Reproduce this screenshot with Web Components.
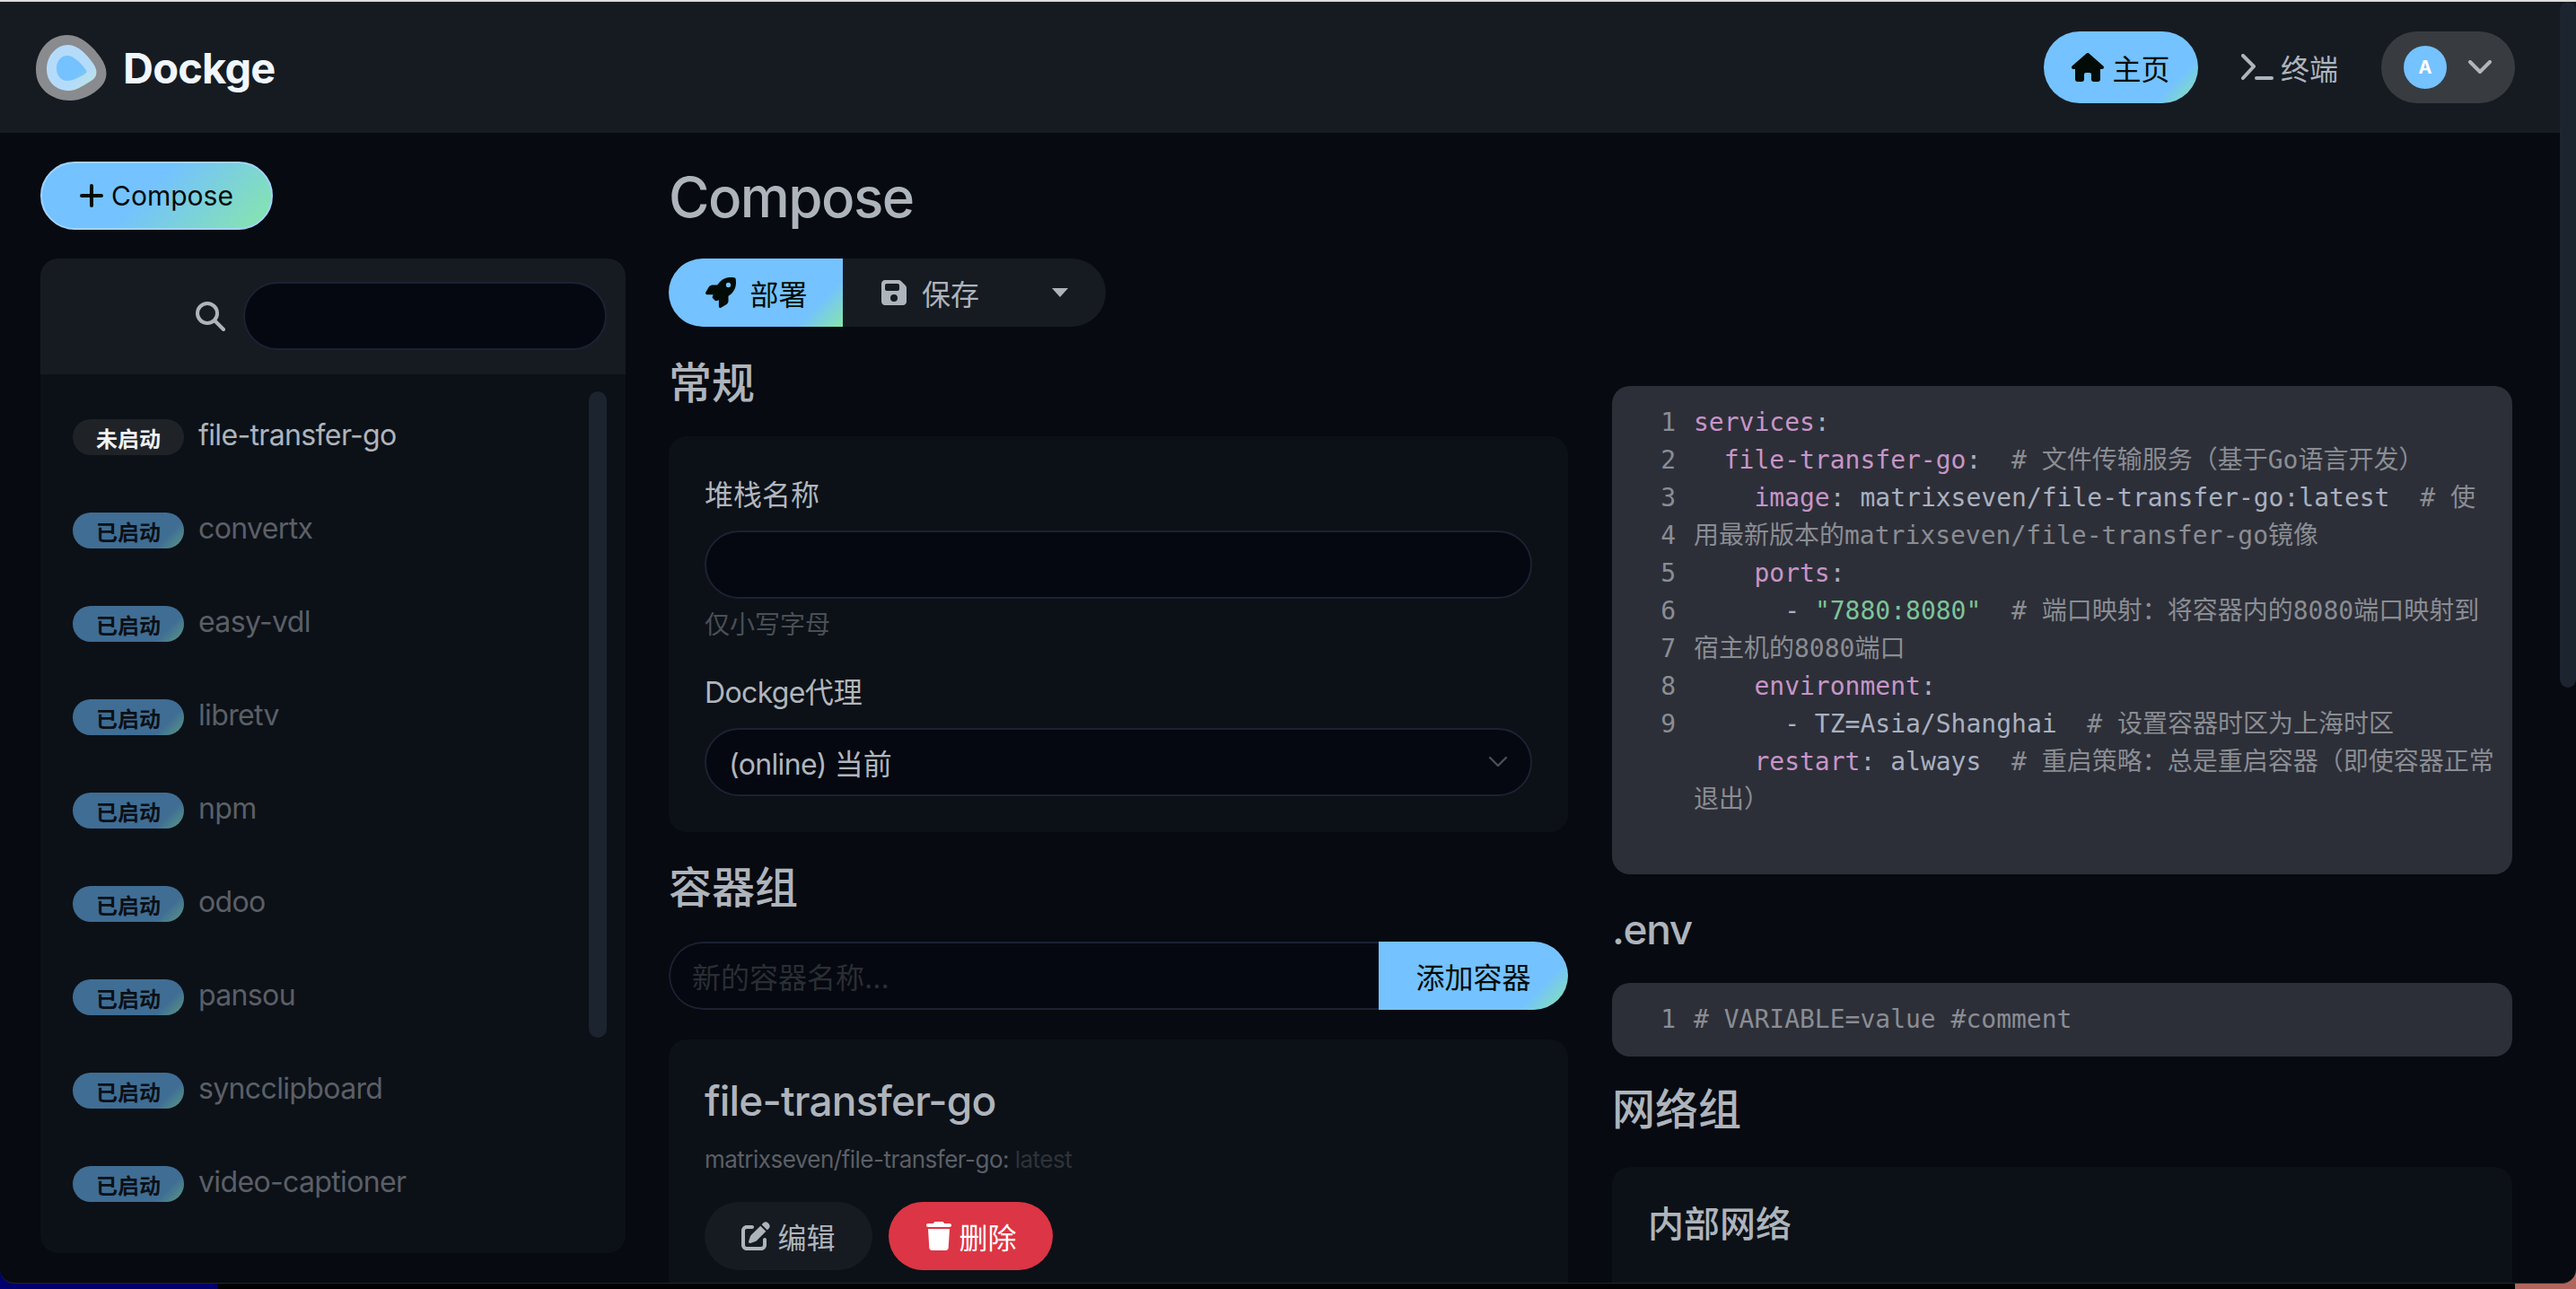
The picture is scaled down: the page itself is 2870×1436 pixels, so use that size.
<!DOCTYPE html>
<html lang="zh-CN">
<head>
<meta charset="utf-8">
<title>Dockge</title>
<style>
  html, body { margin: 0; height: 100%; background: #000; overflow: hidden; }
  body { font-family: Inter, "Noto Sans CJK SC", sans-serif; color: #b1b6bd; }
</style>
</head>
<body>

<dockge-app>
  <dockge-header slot="header"></dockge-header>

  <stack-sidebar slot="sidebar">
    <stack-row status="off" name="file-transfer-go"></stack-row>
    <stack-row status="on" name="convertx"></stack-row>
    <stack-row status="on" name="easy-vdl"></stack-row>
    <stack-row status="on" name="libretv"></stack-row>
    <stack-row status="on" name="npm"></stack-row>
    <stack-row status="on" name="odoo"></stack-row>
    <stack-row status="on" name="pansou"></stack-row>
    <stack-row status="on" name="syncclipboard"></stack-row>
    <stack-row status="on" name="video-captioner"></stack-row>
  </stack-sidebar>

  <compose-form slot="form"></compose-form>
  <compose-side slot="side"></compose-side>
</dockge-app>

<script>
// Font Awesome style solid icons, as used by the app
const ICONS = {
  house: ["0 0 576 512", "M575.8 255.5c0 18-15 32.1-32 32.1h-32l.7 160.2c0 2.7-.2 5.4-.5 8.1V472c0 22.1-17.9 40-40 40H456c-1.1 0-2.2 0-3.3-.1c-1.4 .1-2.8 .1-4.2 .1H416 392c-22.1 0-40-17.9-40-40V448 384c0-17.7-14.3-32-32-32H256c-17.7 0-32 14.3-32 32v64 24c0 22.1-17.9 40-40 40H160 128.1c-1.5 0-3-.1-4.5-.2c-1.2 .1-2.4 .2-3.6 .2H104c-22.1 0-40-17.9-40-40V360c0-.9 0-1.9 .1-2.8V287.6H32c-18 0-32-14-32-32.1c0-9 3-17 10-24L266.4 8c7-7 15-8 22-8s15 2 21 7L564.8 231.5c8 7 12 15 11 24z"],
  rocket: ["0 0 512 512", "M156.6 384.9L125.7 354c-8.5-8.5-11.5-20.8-7.7-32.2c3-8.9 7-20.5 11.8-33.8L24 288c-8.6 0-16.6-4.6-20.9-12.1s-4.2-16.7 .2-24.1l52.5-88.5c13-21.9 36.5-35.3 61.9-35.3l82.3 0c2.4-4 4.8-7.7 7.2-11.3C289.1-4.1 411.1-8.1 483.9 5.3c11.6 2.1 20.6 11.2 22.8 22.8c13.4 72.9 9.3 194.8-111.4 276.7c-3.5 2.4-7.3 4.8-11.3 7.2v82.3c0 25.4-13.4 49-35.3 61.9l-88.5 52.5c-7.4 4.4-16.6 4.5-24.1 .2s-12.1-12.2-12.1-20.9V380.8c-14.1 4.9-26.4 8.9-35.7 11.9c-11.2 3.6-23.4 .5-31.8-7.8zM384 168a40 40 0 1 0 0-80 40 40 0 1 0 0 80z"],
  floppy: ["0 0 448 512", "M64 32C28.7 32 0 60.7 0 96V416c0 35.3 28.7 64 64 64H384c35.3 0 64-28.7 64-64V173.3c0-17-6.7-33.3-18.7-45.3L352 50.7C340 38.7 323.7 32 306.7 32H64zm0 96c0-17.7 14.3-32 32-32H288c17.7 0 32 14.3 32 32v64c0 17.7-14.3 32-32 32H96c-17.7 0-32-14.3-32-32V128zM224 288a64 64 0 1 1 0 128 64 64 0 1 1 0-128z"],
  pen: ["0 0 512 512", "M471.6 21.7c-21.9-21.9-57.3-21.9-79.2 0L362.3 51.7l97.9 97.9 30.1-30.1c21.9-21.9 21.9-57.3 0-79.2L471.6 21.7zm-299.2 220c-6.1 6.1-10.8 13.6-13.5 21.9l-29.6 88.8c-2.9 8.6-.6 18.1 5.8 24.6s15.9 8.7 24.6 5.8l88.8-29.6c8.2-2.7 15.7-7.4 21.9-13.5L437.7 172.3 339.7 74.3 172.4 241.7zM96 64C43 64 0 107 0 160V416c0 53 43 96 96 96H352c53 0 96-43 96-96V320c0-17.7-14.3-32-32-32s-32 14.3-32 32v96c0 17.7-14.3 32-32 32H96c-17.7 0-32-14.3-32-32V160c0-17.7 14.3-32 32-32h96c17.7 0 32-14.3 32-32s-14.3-32-32-32H96z"],
  trash: ["0 0 448 512", "M135.2 17.7L128 32H32C14.3 32 0 46.3 0 64S14.3 96 32 96H416c17.7 0 32-14.3 32-32s-14.3-32-32-32H320l-7.2-14.3C307.4 6.8 296.3 0 284.2 0H163.8c-12.1 0-23.2 6.8-28.6 17.7zM416 128H32L53.2 467c1.6 25.3 22.6 45 47.9 45H346.9c25.3 0 46.3-19.7 47.9-45L416 128z"]
};

function icon(name, size) {
  const [box, d] = ICONS[name];
  return `<svg width="${size}" height="${size}" viewBox="${box}" fill="currentColor"><path d="${d}"/></svg>`;
}

// Shared look for the pill buttons and inputs
const PILLS = `
  .btn {
    display: inline-flex; align-items: center; justify-content: center;
    height: 76px; box-sizing: border-box; border-radius: 38px;
    font-size: 32px; color: #020b05; white-space: nowrap;
  }
  .primary { background: linear-gradient(135deg, #74c2ff 0%, #74c2ff 80%, #86e6a9 100%); }
  .input {
    height: 76px; box-sizing: border-box; border-radius: 38px;
    background: #050810; border: 2px solid #1c2233;
    display: flex; align-items: center; padding: 0 25px; font-size: 32px; color: #b1b6bd;
  }
  .lat { letter-spacing: -0.02em; }
  svg { display: block; flex: none; }
`;

const CARD = `
  .card { background: #0c1117; border-radius: 20px; box-sizing: border-box; }
  h2 { margin: 0; font-size: 48px; line-height: 57px; font-weight: 500; color: #aeb4bc; }
`;

class DockgeApp extends HTMLElement {
  constructor() {
    super();
    this.attachShadow({ mode: "open" }).innerHTML = `
    <style>
      :host { display: block; height: 1436px; background: #000; position: relative; overflow: hidden; }
      .dock { position: absolute; left: 0; bottom: 0; width: 242px; height: 30px; background: #00006e; }
      .corner { position: absolute; right: 0; bottom: 0; width: 68px; height: 30px; background: #b0665c; }
      .window {
        position: relative; height: 1430px; overflow: hidden;
        border-radius: 0 0 16px 16px; border-top: 2px solid #dcdcdc; border-bottom: 1px solid #23262b; box-sizing: border-box;
        background: #070a10; display: flex; flex-direction: column;
      }
      .page { flex: 1; min-height: 0; display: flex; padding: 32px 70px 0 45px; overflow: hidden; }
      .left { width: 652px; flex: none; }
      .form { width: 1002px; flex: none; margin-left: 48px; }
      .side { width: 1003px; flex: none; margin-left: 49px; padding-top: 250px; }
      .bar { position: absolute; right: 0; top: 0; width: 18px; height: 764px; background: #1c2430; border-radius: 9px; }
    </style>
    <div class="dock"></div>
    <div class="corner"></div>
    <div class="window">
      <slot name="header"></slot>
      <div class="page">
        <div class="left"><slot name="sidebar"></slot></div>
        <div class="form"><slot name="form"></slot></div>
        <div class="side"><slot name="side"></slot></div>
      </div>
      <div class="bar"></div>
    </div>
    `;
  }
}

class DockgeHeader extends HTMLElement {
  constructor() {
    super();
    this.attachShadow({ mode: "open" }).innerHTML = `
    <style>
      ${PILLS}
      :host { display: flex; align-items: center; height: 146px; flex: none; background: #161b22; padding: 0 68px 0 40px; }
      .brand { display: flex; align-items: center; gap: 17px; font-size: 47px; font-weight: 700; color: #f0f6fc; letter-spacing: -.8px; }
      .nav { margin-left: auto; display: flex; align-items: center; }
      .home { width: 172px; height: 80px; border-radius: 40px; gap: 9px; font-size: 32px; }
      .term { display: flex; align-items: center; gap: 8px; margin-left: 48px; font-size: 32px; color: #aeb4bc; }
      .profile {
        margin-left: 48px; width: 149px; height: 80px; border-radius: 40px; background: #383c40;
        display: flex; align-items: center; box-sizing: border-box; padding-left: 25px;
      }
      .avatar {
        width: 48px; height: 48px; border-radius: 50%; background: #74c2ff; color: #fff;
        font-size: 20px; font-weight: 700; display: flex; align-items: center; justify-content: center;
      }
      .chev { margin-left: 24px; }
    </style>
    <div class="brand">
      <svg width="80" height="75" viewBox="40 37 80 75">
        <defs>
          <linearGradient id="mid" x1="0.3" y1="0.3" x2="1" y2="1">
            <stop offset="0.55" stop-color="#b5dbfa"/><stop offset="1" stop-color="#b9ecd4"/>
          </linearGradient>
          <linearGradient id="core" x1="0" y1="0" x2="1" y2="1">
            <stop offset="0.7" stop-color="#74c2ff"/><stop offset="1" stop-color="#7fd6d0"/>
          </linearGradient>
        </defs>
        <path fill="#8a8b8e" d="M75 38C90 38 103 50 112 63C120 74 121 86 113 95C104 105 90 111 78 111C58 111 40 98 40 77C40 55 55 38 75 38Z"/>
        <path fill="url(#mid)" d="M76 49C87 49 97 60 104 70C110 79 108 86 100 90C92 95 84 100 77 100C62 100 52 90 52 76C52 61 63 49 76 49Z"/>
        <path fill="url(#core)" d="M75 61C82 61 90 69 95 76C98 79 96 81 92 83C86 86 80 89 75 89C68 89 63 83 63 75C63 67 68 61 75 61Z"/>
      </svg>
      <span>Dockge</span>
    </div>
    <div class="nav">
      <div class="btn primary home">${icon("house", 36)}<span>主页</span></div>
      <div class="term">
        <svg width="36" height="30" viewBox="0 0 36 30" fill="none" stroke="#aeb4bc" stroke-width="4" stroke-linecap="round" stroke-linejoin="round">
          <path d="M2 2 L14 14 L2 27"/><path d="M17 27 H34"/>
        </svg>
        <span>终端</span>
      </div>
      <div class="profile">
        <div class="avatar">A</div>
        <svg class="chev" width="26" height="16" viewBox="0 0 26 16" fill="none" stroke="#b1b6bd" stroke-width="4" stroke-linecap="round" stroke-linejoin="round"><path d="M2 2 L13 13 L24 2"/></svg>
      </div>
    </div>
    `;
  }
}

class StackSidebar extends HTMLElement {
  constructor() {
    super();
    this.attachShadow({ mode: "open" }).innerHTML = `
    <style>
      ${PILLS}
      ${CARD}
      :host { display: block; }
      .add { width: 259px; gap: 9px; font-size: 30px; border: 2px solid #a2d3fb; background: linear-gradient(135deg, #74c2ff 0%, #74c2ff 45%, #86e6a9 100%); }
      .card { margin-top: 32px; height: 1108px; overflow: hidden; display: flex; flex-direction: column; }
      .top { height: 129px; flex: none; background: #161b22; display: flex; align-items: center; justify-content: flex-end; padding: 0 21px 2px 0; box-sizing: border-box; gap: 20px; }
      .search { width: 405px; }
      .body { flex: 1; position: relative; padding-top: 18px; }
      .thumb { position: absolute; left: 611px; top: 19px; width: 20px; height: 720px; border-radius: 10px; background: #1c2430; }
    </style>
    <div class="btn add">
      <svg width="26" height="26" viewBox="0 0 26 26" stroke="#020b05" stroke-width="4" stroke-linecap="round"><path d="M13 2V24M2 13H24"/></svg>
      <span>Compose</span>
    </div>
    <div class="card">
      <div class="top">
        <svg width="34" height="34" viewBox="0 0 34 34" fill="none" stroke="#aeb4bc" stroke-width="4" stroke-linecap="round"><circle cx="14" cy="14" r="11"/><path d="M22 22L32 32"/></svg>
        <div class="input search"></div>
      </div>
      <div class="body">
        <slot></slot>
        <div class="thumb"></div>
      </div>
    </div>
    `;
  }
}

class StackRow extends HTMLElement {
  constructor() {
    super();
    const on = this.getAttribute("status") === "on";
    this.attachShadow({ mode: "open" }).innerHTML = `
    <style>
      :host { display: flex; align-items: center; height: 104px; padding-left: 36px; gap: 16px; }
      .badge {
        width: 124px; height: 40px; border-radius: 20px; display: flex; align-items: center; justify-content: center;
        font-size: 24px; font-weight: 600;
      }
      .on { background: linear-gradient(135deg, #3f6d94 0%, #3f6d94 80%, #5c9a84 100%); color: #0b1016; }
      .off { background: #1f2328; color: #f0f2f4; }
      .name { font-size: 32px; letter-spacing: -0.02em; color: ${on ? "#5b5f67" : "#aeb4bc"}; position: relative; top: -3px; }
    </style>
    <span class="badge ${on ? "on" : "off"}">${on ? "已启动" : "未启动"}</span>
    <span class="name">${this.getAttribute("name")}</span>
    `;
  }
}

class ComposeForm extends HTMLElement {
  constructor() {
    super();
    this.attachShadow({ mode: "open" }).innerHTML = `
    <style>
      ${PILLS}
      ${CARD}
      :host { display: block; }
      h1 { margin: 2px 0 0; font-size: 62px; line-height: 75px; font-weight: 500; color: #aeb4bc; letter-spacing: -0.025em; }
      .group { display: flex; width: 487px; height: 76px; margin-top: 31px; border-radius: 38px; overflow: hidden; }
      .group .btn { border-radius: 0; gap: 15px; }
      .deploy { width: 194px; padding-left: 2px; }
      .save { flex: 1; background: #161b22; color: #aeb4bc; padding-left: 41px; justify-content: flex-start; }
      .caret { margin-left: 66px; width: 0; height: 0; border: 9px solid transparent; border-top: 10px solid #aeb4bc; border-bottom: 0; }
      h2.first { margin-top: 34px; }
      .general { margin-top: 31px; height: 441px; padding: 42px 40px 0; }
      label { display: block; font-size: 32px; line-height: 48px; color: #b1b6bd; }
      .general .input { margin-top: 15px; }
      .hint { font-size: 28px; line-height: 42px; color: #4a4f56; margin-top: 8px; }
      .general label.second { margin-top: 31px; }
      .select { justify-content: space-between; }
      h2.group-title { margin-top: 33px; }
      .adder { display: flex; height: 76px; margin-top: 32px; border-radius: 38px; overflow: hidden; }
      .adder .input { flex: 1; border-right: 0; border-radius: 38px 0 0 38px; color: #2a2e34; font-size: 32px; padding-left: 24px; }
      .adder .btn { width: 211px; border-radius: 0; }
      .box { margin-top: 33px; padding: 35px 40px 0; height: 300px; }
      .box h3 { margin: 0; font-size: 46px; line-height: 66px; font-weight: 500; color: #aeb4bc; letter-spacing: -0.018em; }
      .image { margin-top: 13px; font-size: 26px; line-height: 40px; color: #5b5f67; letter-spacing: -0.02em; }
      .image span { color: #2f3339; }
      .row { display: flex; gap: 18px; margin-top: 27px; }
      .row .btn { gap: 8px; }
      .edit { width: 187px; background: #161b22; color: #aeb4bc; }
      .del { width: 183px; background: #dc3545; color: #fff; gap: 6px !important; }
    </style>
    <h1>Compose</h1>
    <div class="group">
      <div class="btn primary deploy">${icon("rocket", 34)}<span>部署</span></div>
      <div class="btn save">${icon("floppy", 32)}<span>保存</span><span class="caret"></span></div>
    </div>
    <h2 class="first">常规</h2>
    <div class="card general">
      <label>堆栈名称</label>
      <div class="input"></div>
      <div class="hint">仅小写字母</div>
      <label class="second"><span class="lat">Dockge</span>代理</label>
      <div class="input select">
        <span><span class="lat">(online)</span> 当前</span>
        <svg width="22" height="14" viewBox="0 0 22 14" fill="none" stroke="#4a4f56" stroke-width="2.4" stroke-linecap="round" stroke-linejoin="round"><path d="M2 2L11 11L20 2"/></svg>
      </div>
    </div>
    <h2 class="group-title">容器组</h2>
    <div class="adder">
      <div class="input">新的容器名称...</div>
      <div class="btn primary">添加容器</div>
    </div>
    <div class="card box">
      <h3>file-transfer-go</h3>
      <div class="image">matrixseven/file-transfer-go: <span>latest</span></div>
      <div class="row">
        <div class="btn edit">${icon("pen", 32)}<span>编辑</span></div>
        <div class="btn del">${icon("trash", 32)}<span>删除</span></div>
      </div>
    </div>
    `;
  }
}

class CodeBox extends HTMLElement {
  constructor() {
    super();
    this.attachShadow({ mode: "open" }).innerHTML = `
    <style>
      :host {
        display: flex; box-sizing: border-box; background: #2d2f38; border-radius: 20px;
        padding: 20px 19px 24px 0;
        font-family: "DejaVu Sans Mono", "Noto Sans CJK SC", monospace; font-size: 28px; line-height: 42px; color: #a9b1c0;
      }
      .nums { width: 91px; padding-right: 20px; box-sizing: border-box; text-align: right; color: #8a8d93; flex: none; white-space: pre; }
      .code { flex: 1; min-width: 0; }
      ::slotted(div) { white-space: pre-wrap; word-break: break-all; }
    </style>
    <div class="nums">${this.getAttribute("numbers").replace(/ /g, "\n")}</div>
    <div class="code"><slot></slot></div>
    `;
  }
}

class ComposeSide extends HTMLElement {
  constructor() {
    super();
    this.attachShadow({ mode: "open" }).innerHTML = `
    <style>
      ${CARD}
      :host { display: block; }
      .yaml { height: 544px; }
      .env-title { margin: 32px 0 0; font-size: 46px; line-height: 58px; font-weight: 500; color: #aeb4bc; letter-spacing: -0.03em; }
      .env { margin-top: 31px; height: 82px; }
      .net-title { margin-top: 30px; }
      .net { margin-top: 36px; height: 300px; padding: 36px 40px; }
      .net h3 { margin: 0; font-size: 40px; line-height: 56px; font-weight: 500; color: #aeb4bc; }
      .k { color: #c795c7; } .s { color: #7dc49a; } .c { color: #8a8d93; }
    </style>
    <code-box class="yaml" numbers="1 2 3 4 5 6 7 8 9">
      <div><span class="k">services</span>:</div>
      <div>  <span class="k">file-transfer-go</span>:  <span class="c"># 文件传输服务（基于Go语言开发）</span></div>
      <div>    <span class="k">image</span>: matrixseven/file-transfer-go:latest  <span class="c"># 使</span><span class="c">用最新版本的matrixseven/file-transfer-go镜像</span></div>
      <div>    <span class="k">ports</span>:</div>
      <div>      - <span class="s">"7880:8080"</span>  <span class="c"># 端口映射：将容器内的8080端口映射到</span><span class="c">宿主机的8080端口</span></div>
      <div>    <span class="k">environment</span>:</div>
      <div>      - TZ=Asia/Shanghai  <span class="c"># 设置容器时区为上海时区</span></div>
      <div>    <span class="k">restart</span>: always  <span class="c"># 重启策略：总是重启容器（即使容器正常</span><span class="c">退出）</span></div>
    </code-box>
    <div class="env-title">.env</div>
    <code-box class="env" numbers="1"><div class="c"># VARIABLE=value #comment</div></code-box>
    <h2 class="net-title">网络组</h2>
    <div class="card net"><h3>内部网络</h3></div>
    `;
  }
}

customElements.define("dockge-app", DockgeApp);
customElements.define("dockge-header", DockgeHeader);
customElements.define("stack-sidebar", StackSidebar);
customElements.define("stack-row", StackRow);
customElements.define("compose-form", ComposeForm);
customElements.define("code-box", CodeBox);
customElements.define("compose-side", ComposeSide);
</script>
</body>
</html>
